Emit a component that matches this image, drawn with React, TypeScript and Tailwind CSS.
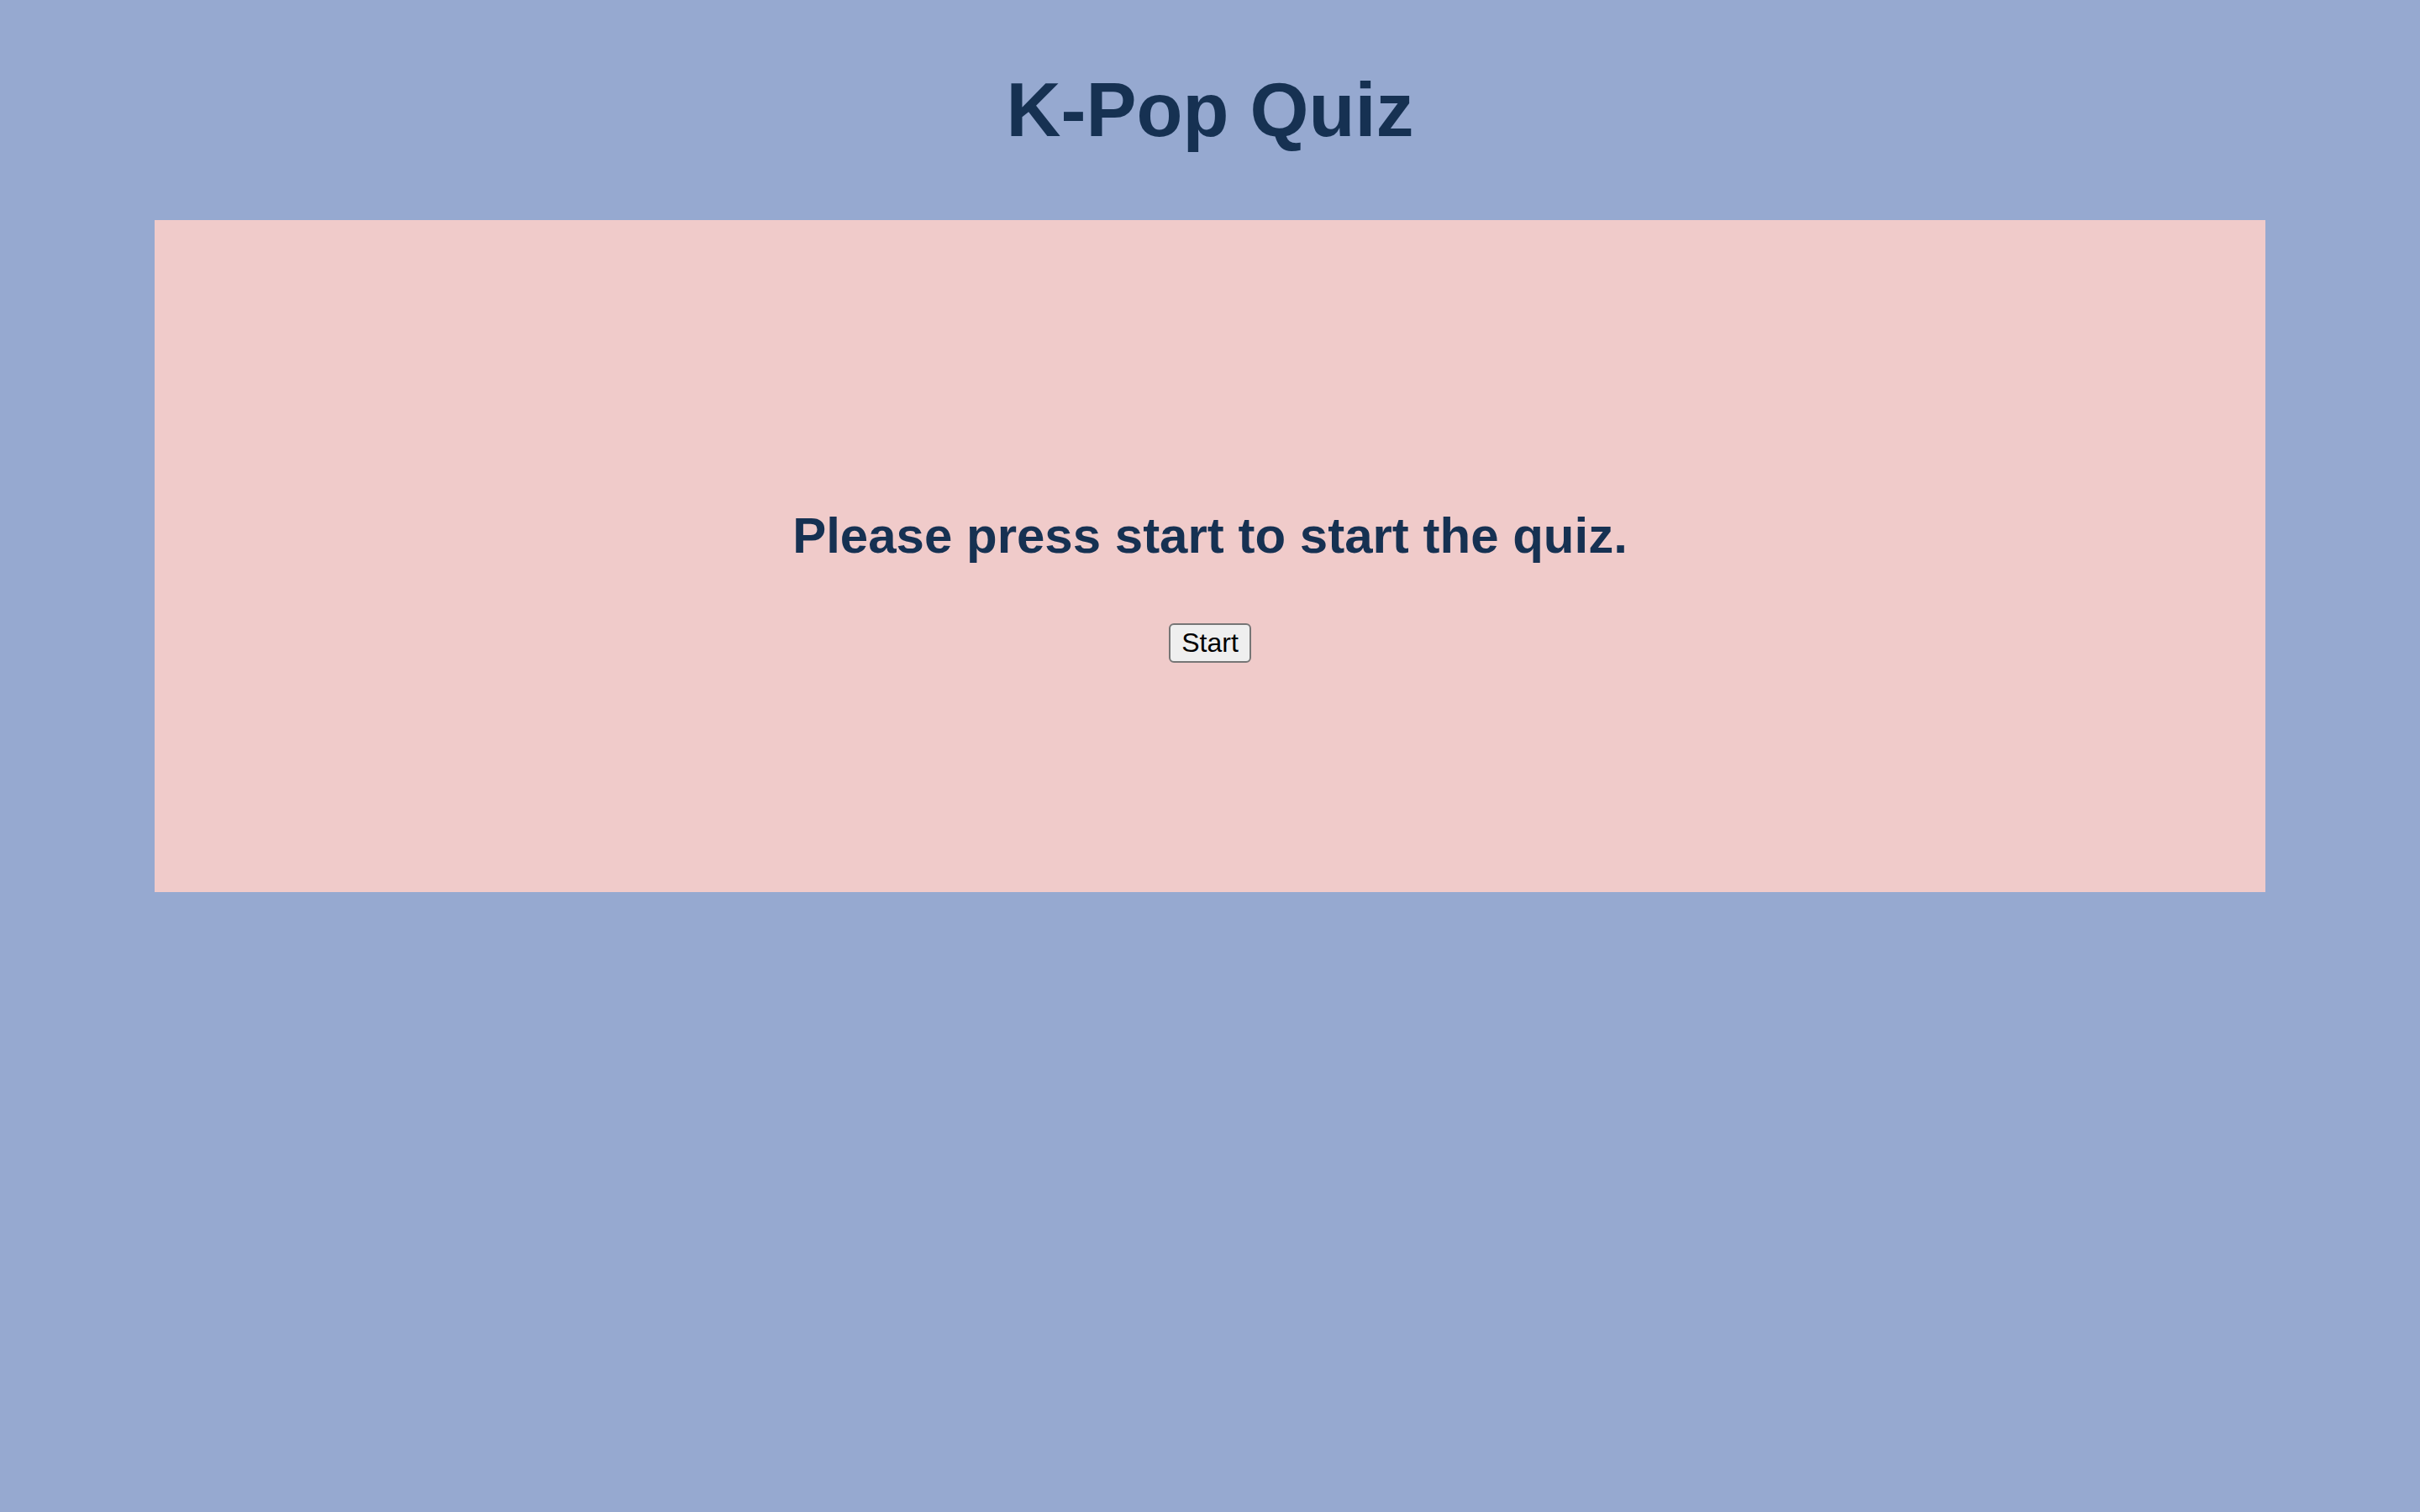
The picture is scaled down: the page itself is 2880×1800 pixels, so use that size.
export default function App() {
  return (
    <div className="min-h-screen w-full bg-[#96a9d0] font-['Liberation_Sans',Arial,sans-serif] pt-[79px] pb-[1px]">
      <h1 className="text-center text-[90px] leading-[104px] font-bold text-[#163152]">K-Pop Quiz</h1>
      <div className="mx-[184px] mt-[79px] h-[800px] bg-[#f0cbca] flex flex-col items-center pt-[341px]">
        <h2 className="text-center text-[60px] leading-[69px] font-bold text-[#163152]">
          Please press start to start the quiz.
        </h2>
        <button className="mt-[70px] h-[47px] w-[98px] flex items-center justify-center border-2 border-[#767676] rounded-[6px] bg-[#efefef] text-[32px] leading-[37px] text-black font-['Liberation_Sans',Arial,sans-serif]">
          Start
        </button>
      </div>
    </div>
  );
}
